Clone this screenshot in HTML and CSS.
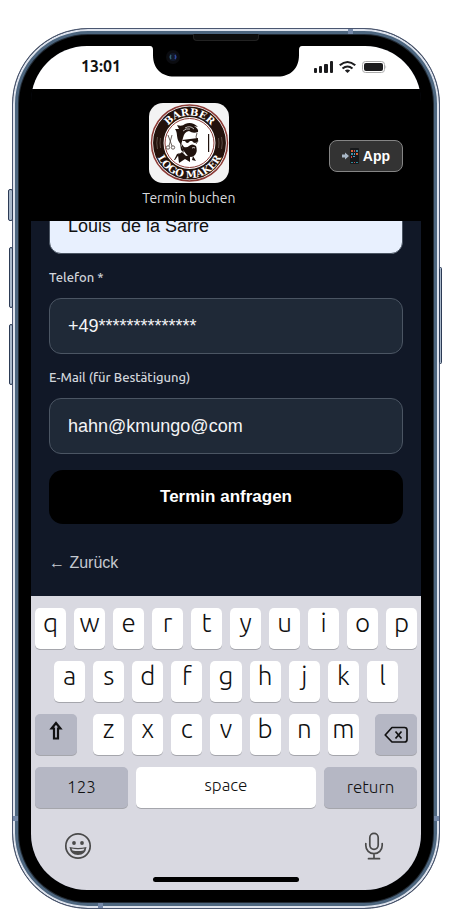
FILE: index.html
```html
<!DOCTYPE html>
<html lang="de">
<head>
    <meta charset="UTF-8">
    <meta name="viewport" content="width=device-width, initial-scale=1.0">
    <title>Termin buchen</title>
    <link rel="stylesheet" href="styles.css">
</head>
<body>
<div class="phone">
    <span class="side-button mute"></span>
    <span class="side-button volume-up"></span>
    <span class="side-button volume-down"></span>
    <span class="side-button power"></span>
    <span class="band band-top"></span>
    <span class="band band-left"></span>
    <span class="band band-right"></span>
    <span class="band band-bottom"></span>
    <span class="speaker"></span>
    <div class="screen">
        <svg class="notch" viewBox="0 0 152 31">
            <path d="M0 0H152Q149 0 149 4V9C149 23 140 30.500 128 30.500H24C12 30.500 3 23 3 9V4Q3 0 0 0Z" fill="#000"/>
            <circle cx="23" cy="11" r="7" fill="#0b0c10"/>
            <circle cx="23" cy="11" r="4" fill="#11182a"/>
            <path d="M21 9q-1.500 2 0 4" fill="none" stroke="#34606f" stroke-width="1.500"/>
            <path d="M25 9q1.500 2 0 4" fill="none" stroke="#3048a0" stroke-width="1.500"/>
        </svg>
        <div class="status-bar">
            <span class="time">13:01</span>
            <span class="status-icons">
                <svg width="19" height="12" viewBox="0 0 19 12" fill="#1c1c1e">
                    <rect x="0" y="7" width="3" height="5" rx="1"/>
                    <rect x="5" y="5" width="3" height="7" rx="1"/>
                    <rect x="10" y="3" width="4" height="9" rx="1"/>
                    <rect x="16" y="0" width="3" height="12" rx="1"/>
                </svg>
                <svg width="17" height="12" viewBox="0 0 16 12" preserveAspectRatio="none" fill="none" stroke="#1c1c1e" stroke-width="2">
                    <path d="M.7 4.300Q8-2.200 15.300 4.300"/>
                    <path d="M3.300 7.500Q8 3.500 12.700 7.500"/>
                    <path d="M8 12L5.500 9.500Q8 7.500 10.500 9.500Z" fill="#1c1c1e" stroke="none"/>
                </svg>
                <svg width="25" height="12" viewBox="0 0 25 12">
                    <rect x=".5" y=".5" width="22" height="11" rx="3" fill="#fff" stroke="#aaa"/>
                    <rect x="2" y="2" width="19" height="8" rx="2" fill="#1c1c1e"/>
                    <path d="M23.500 4q1.500 2 0 4z" fill="#aaa"/>
                </svg>
            </span>
        </div>

        <header class="header">
            <div class="brand">
                <svg class="logo" viewBox="0 0 80 80">
                    <defs>
                        <path id="arc-top" d="M13 40A27.500 27.500 0 0 1 68 40"/>
                        <path id="arc-bottom" d="M5.500 40A35 35 0 0 0 75.500 40"/>
                    </defs>
                    <rect width="80" height="80" fill="#f3f3f3"/>
                    <circle cx="40.500" cy="40" r="38" fill="#fff" stroke="#8b3a35" stroke-width="1.500"/>
                    <circle cx="40.500" cy="40" r="31.200" fill="none" stroke="#24120c" stroke-width="10.500"/>
                    <circle cx="40.500" cy="40" r="24.500" fill="#fff" stroke="#8b3a35" stroke-width="1"/>
                    <g fill="none" stroke="#5a4a42" stroke-width="1">
                        <path d="M8.500 34q-1.500 6 0 12M11.500 35q-1 5 0 10M72.500 34q1.500 6 0 12M69.500 35q1 5 0 10"/>
                    </g>
                    <text class="logo-text"><textPath href="#arc-top" startOffset="50%">BARBER</textPath></text>
                    <text class="logo-text"><textPath href="#arc-bottom" startOffset="50%">LOGO MAKER</textPath></text>
                    <g fill="#20120d">
                        <path d="M30 39C27 34 29 30 26 26L30 26 28 22Q33 24 36 21Q43 18 49 24L45 23Q50 26 49 29Q44 31 40 28Q35 29 34 35L32 42Z"/>
                        <path d="M33 37L49 35V38Q46 42 43 38L41 38Q38 42 36 38L34 38Z"/>
                        <path d="M32 40L35 44Q38 45 40 43Q43 40 47 43Q49 48 46 52Q42 56 38 52L34 47Z"/>
                        <path d="M31 40L34 46 35 50 32 47Z"/>
                        <path d="M29 52L33 49 37 53 41 52V59L36 56 30 60Z"/>
                        <path d="M26 57L31 50 28 51 25 57ZM44 53L47 58 43 57Z"/>
                        <path d="M59 31h1.200v18h-1.200z"/>
                    </g>
                    <path d="M48 30L47 34 49 38 47 41M33 30L32 35" fill="none" stroke="#20120d" stroke-width=".7"/>
                    <path d="M36 25q5-3 9 1M34 28q3-3 7-2" fill="none" stroke="#fff" stroke-width=".7"/>
                    <path d="M43 45q2-1 3 0" fill="none" stroke="#fff" stroke-width=".8"/>
                    <g fill="none" stroke="#4a3c36" stroke-width=".8">
                        <path d="M19 32L23 43M23 32L20 43"/>
                        <circle cx="19" cy="44.500" r="1.700"/>
                        <circle cx="24" cy="44.500" r="1.700"/>
                    </g>
                </svg>
                <span class="brand-title">Termin buchen</span>
            </div>
            <button class="app-button" type="button">
                <svg width="17" height="16" viewBox="0 0 17 16">
                    <path d="M0 6.500h3V4.500l4 3.500-4 3.500V9.500H0z" fill="#a9b7c6"/>
                    <rect x="8" y="0" width="9" height="16" rx="1" fill="#17191b"/>
                    <path d="M9 2h2v2H9zM14 5h2v2h-2z" fill="#d8643a"/>
                    <path d="M12 2h1v2h-1zM9 8h1v2H9z" fill="#c9484a"/>
                    <path d="M14 2h2v2h-2zM9 5h2v2H9z" fill="#3b8fa8"/>
                    <path d="M12 5h1v2h-1zM11 8h2v1h-2z" fill="#4a9cc9"/>
                    <path d="M9 14h2v1H9zM14 14h2v1h-2z" fill="#2f8a9a"/>
                    <path d="M12 14h1v1h-1z" fill="#c9484a"/>
                </svg>
                App
            </button>
        </header>

        <form class="booking">
            <input class="field filled" type="text" aria-label="Name" value="Louis  de la Sarre">
            <label class="label" for="phone">Telefon *</label>
            <input class="field" id="phone" type="tel" value="+49**************">
            <label class="label" for="email">E-Mail (für Bestätigung)</label>
            <input class="field" id="email" type="text" value="hahn@kmungo@com">
            <button class="submit" type="button">Termin anfragen</button>
            <a class="back" href="#">← Zurück</a>
        </form>

        <div class="keyboard">
            <div class="row">
                <button class="key">q</button>
                <button class="key">w</button>
                <button class="key">e</button>
                <button class="key">r</button>
                <button class="key">t</button>
                <button class="key">y</button>
                <button class="key">u</button>
                <button class="key">i</button>
                <button class="key">o</button>
                <button class="key">p</button>
            </div>
            <div class="row row-middle">
                <button class="key">a</button>
                <button class="key">s</button>
                <button class="key">d</button>
                <button class="key">f</button>
                <button class="key">g</button>
                <button class="key">h</button>
                <button class="key">j</button>
                <button class="key">k</button>
                <button class="key">l</button>
            </div>
            <div class="row row-shift">
                <button class="key dark" aria-label="Shift">
                    <svg width="14" height="19" viewBox="0 0 14 19" fill="none" stroke="#111" stroke-width="2.200">
                        <path d="M7 2L2.600 7.500H5V17.500H9V7.500H11.400z"/>
                    </svg>
                </button>
                <div class="letters">
                    <button class="key">z</button>
                    <button class="key">x</button>
                    <button class="key">c</button>
                    <button class="key">v</button>
                    <button class="key">b</button>
                    <button class="key">n</button>
                    <button class="key">m</button>
                </div>
                <button class="key dark" aria-label="Löschen">
                    <svg width="24" height="18" viewBox="0 0 24 18" fill="none" stroke="#111" stroke-width="1.700" stroke-linejoin="round">
                        <path d="M8 1.500h12.500q2.500 0 2.500 2.500v9.500q0 2.500-2.500 2.500H8L1.200 9z"/>
                        <path d="M11.500 5.500l6 7M17.500 5.500l-6 7"/>
                    </svg>
                </button>
            </div>
            <div class="row row-space">
                <button class="key dark wide">123</button>
                <button class="key space">space</button>
                <button class="key dark wide">return</button>
            </div>
            <div class="tools">
                <button class="tool" aria-label="Emoji">
                    <svg width="28" height="28" viewBox="0 0 28 28">
                        <circle cx="14" cy="14" r="12.200" fill="none" stroke="#4a4a4a" stroke-width="1.700"/>
                        <circle cx="10" cy="11" r="1.900" fill="#4a4a4a"/>
                        <circle cx="18" cy="11" r="1.900" fill="#4a4a4a"/>
                        <path d="M5.500 15q8.500 2 17 0q-1 8-8.500 8t-8.500-8z" fill="#4a4a4a"/>
                        <path d="M7.500 16.500q6.500 1.500 13 0l-1 2q-5.500 1.200-11 0z" fill="#d9d9e1"/>
                    </svg>
                </button>
                <button class="tool" aria-label="Diktieren">
                    <svg width="28" height="28" viewBox="0 0 28 28" fill="none" stroke="#4a4a4a" stroke-width="1.700" stroke-linecap="round">
                        <rect x="9.800" y="1.300" width="8.400" height="16" rx="4.200"/>
                        <path d="M5.800 11.500v2a8.200 8.200 0 0 0 16.400 0v-2M14 22v4.500M8.500 26.700h11"/>
                    </svg>
                </button>
            </div>
            <div class="home-bar"></div>
        </div>
    </div>
</div>
</body>
</html>
```

FILE: styles.css
```css
* {
    box-sizing: border-box;
}
body {
    margin: 0;
    padding: 28px 14px 13px 12px;
    background: #fff;
    font-family: "Ubuntu", "Noto Sans", sans-serif;
}
button,
input {
    margin: 0;
    border: none;
    font-family: inherit;
}

/* phone frame */
.phone {
    position: relative;
    padding: 17px 18px 18px;
    border: 1px solid #4a5670;
    border-radius: 76px;
    background: #000;
    box-shadow: inset 0 0 0 2px #dfe4ee, inset 0 0 0 5px #4d667f, inset 0 0 0 6px #222b35;
}
.side-button {
    position: absolute;
    border: 1px solid #2c3b55;
    border-radius: 2px;
    background: #a9b8ca;
}
.mute {
    left: -5px;
    top: 160px;
    width: 5px;
    height: 32px;
}
.volume-up {
    left: -4px;
    top: 218px;
    width: 4px;
    height: 61px;
}
.volume-down {
    left: -4px;
    top: 295px;
    width: 4px;
    height: 61px;
}
.power {
    right: -3px;
    top: 238px;
    width: 3px;
    height: 97px;
}
.band {
    position: absolute;
    width: 5px;
    height: 5px;
    background: #7488a8;
}
.band-top {
    right: 86px;
    top: 0;
}
.band-left {
    left: 0;
    bottom: 87px;
}
.band-right {
    right: 0;
    bottom: 87px;
}
.band-bottom {
    left: 85px;
    bottom: 0;
}
.speaker {
    position: absolute;
    top: 5px;
    left: 50%;
    width: 66px;
    height: 7px;
    margin-left: -33px;
    border: 1px solid #222;
    border-top: none;
    border-radius: 0 0 4px 4px;
    background: #0c0c0c;
}
.screen {
    position: relative;
    overflow: hidden;
    border-radius: 56px;
    background: #111827;
}
.notch {
    position: absolute;
    top: 0;
    left: 50%;
    width: 152px;
    height: 31px;
    margin-left: -76px;
}

/* status bar */
.status-bar {
    display: flex;
    align-items: center;
    justify-content: space-between;
    height: 43px;
    padding: 0 34px 0 50px;
    background: #fff;
}
.time {
    color: #111;
    font-size: 16px;
    font-weight: 600;
    line-height: 20px;
    padding-bottom: 3px;
}
.status-icons {
    display: flex;
    gap: 6px;
    padding-bottom: 1px;
}

/* header */
.header {
    display: flex;
    align-items: center;
    padding: 14px 18px 13px;
    background: #000;
}
.brand {
    display: flex;
    flex: 1;
    flex-direction: column;
    align-items: center;
    gap: 5px;
}
.logo {
    width: 80px;
    height: 80px;
    border-radius: 14px;
}
.logo-text {
    fill: #fff;
    font-family: "DejaVu Serif", serif;
    font-size: 10px;
    font-weight: 700;
    text-anchor: middle;
}
.brand-title {
    color: #d8dadd;
    font-size: 14px;
    line-height: 20px;
}
.app-button {
    display: flex;
    align-items: center;
    gap: 4px;
    height: 32px;
    padding: 0 12px;
    border: 1px solid #858585;
    border-radius: 8px;
    background: #333;
    color: #fff;
    font-family: "Liberation Sans", sans-serif;
    font-size: 14px;
    font-weight: 700;
}

/* form, scrolled to its end */
.booking {
    display: flex;
    flex-direction: column;
    justify-content: flex-end;
    height: 375px;
    padding: 0 18px 23px;
    overflow: hidden;
    font-family: "Liberation Sans", sans-serif;
}
.field {
    flex: none;
    width: 100%;
    height: 56px;
    padding: 0 18px;
    border: 1px solid #4b5563;
    border-radius: 12px;
    background: #1f2937;
    color: #f3f4f6;
    font-size: 18px;
}
.filled {
    background: #e8f0fe;
    color: #111;
}
.label {
    padding: 13px 0 11px;
    color: #d1d5db;
    font-family: "Ubuntu", "Noto Sans", sans-serif;
    font-size: 13px;
    font-weight: 500;
    line-height: 20px;
}
.submit {
    flex: none;
    height: 54px;
    margin: 16px 0 29px;
    border-radius: 14px;
    background: #000;
    color: #fff;
    font-size: 17px;
    font-weight: 700;
}
.back {
    align-self: flex-start;
    color: #c5c9d0;
    font-size: 16px;
    line-height: 20px;
    text-decoration: none;
}

/* keyboard */
.keyboard {
    padding: 12px 4px 8px;
    background: #d9d9e1;
}
.row {
    display: flex;
    gap: 8px;
    margin-bottom: 12px;
}
.row-middle {
    padding: 0 19px;
}
.row-shift {
    gap: 16px;
}
.letters {
    display: flex;
    flex: 1;
    gap: 8px;
}
.key {
    display: flex;
    flex: 1;
    align-items: center;
    justify-content: center;
    height: 41px;
    padding: 0 0 12px;
    border-radius: 5px;
    background: #fff;
    box-shadow: 0 1px 0 #a5a6ac;
    color: #111;
    font-size: 26px;
    font-weight: 300;
}
.dark {
    padding: 0;
    background: #b5b7c4;
}
.row-shift > .dark {
    flex: 0 0 42px;
}
.row-shift > .dark:first-child {
    padding-bottom: 8px;
}
.row-space .key {
    padding-bottom: 2px;
    font-size: 17px;
}
.row-space .wide {
    flex: 0 0 93px;
}
.row-space .space {
    padding-bottom: 6px;
}
.tools {
    display: flex;
    justify-content: space-between;
    padding: 12px 29px 17px;
}
.tool {
    padding: 0;
    background: none;
}
.tool svg {
    display: block;
}
.home-bar {
    width: 146px;
    height: 5px;
    margin: 0 auto;
    border-radius: 3px;
    background: #000;
}
```
